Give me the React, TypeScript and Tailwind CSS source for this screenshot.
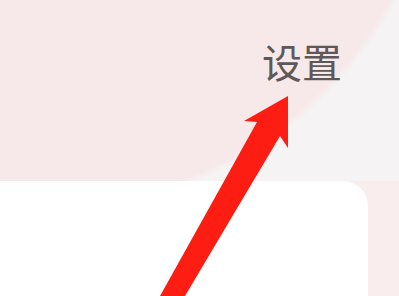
import React from "react";

export default function App() {
  return (
    <div className="relative w-[399px] h-[296px] overflow-hidden bg-[#f9eded] font-['Noto_Sans_CJK_SC','Noto_Sans',sans-serif]">
      <div className="h-[181px] flex justify-end items-start pt-[41px] pr-[57px] bg-[radial-gradient(circle_at_46px_-187px,#f7e8e9_0,#f7e8e9_390px,#f5f3f4_398px)]">
        <span className="text-[40px] leading-none text-[#5e5858] font-normal">设置</span>
      </div>
      <div className="flex h-[115px]">
        <div className="w-[368px] h-full bg-white rounded-tr-[25px]" />
        <div className="flex-1 h-full bg-[#f9eded]" />
      </div>
      <svg
        className="absolute left-0 top-0 pointer-events-none"
        width="399"
        height="296"
        viewBox="0 0 399 296"
      >
        <polygon
          points="288,96 288,148 280,136 185,296 160,296 257,122 244,121"
          fill="#fd1d12"
        />
      </svg>
    </div>
  );
}
